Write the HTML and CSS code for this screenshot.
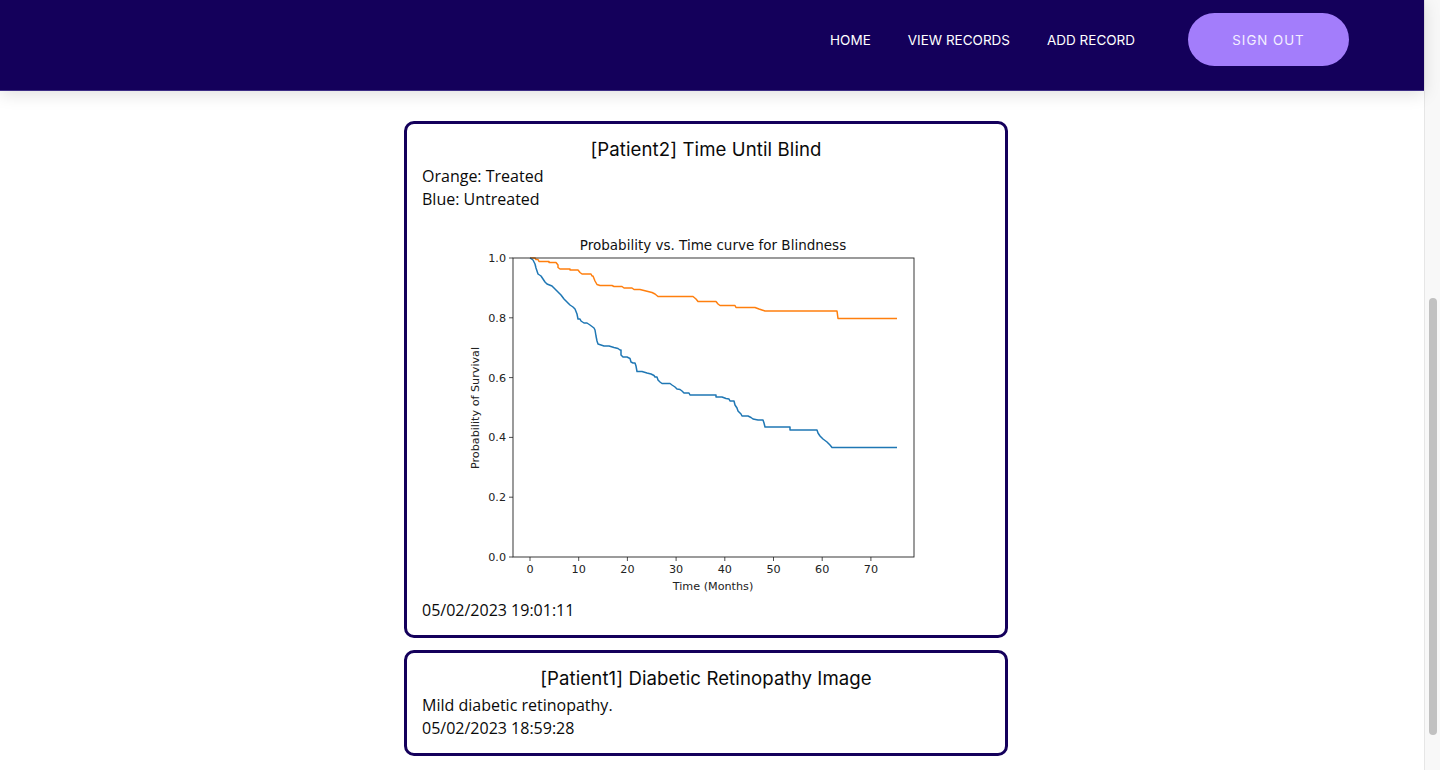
FILE: index.html
```html
<!DOCTYPE html>
<html lang="en">
<head>
<meta charset="utf-8">
<title>Records</title>
<link rel="stylesheet" href="styles.css">
</head>
<body>
<div class="page">
<header class="topbar">
  <nav class="nav">
    <a class="nav-link" href="#">HOME</a>
    <a class="nav-link" href="#">VIEW RECORDS</a>
    <a class="nav-link" href="#">ADD RECORD</a>
    <a class="signout" href="#">SIGN OUT</a>
  </nav>
</header>
<main class="records">
  <section class="card">
    <h2 class="card-title">[Patient2] Time Until Blind</h2>
    <p class="card-text">Orange: Treated</p>
    <p class="card-text">Blue: Untreated</p>
    <div class="chart-wrap">
      <svg class="chart" width="517" height="388" viewBox="448 210 517 388" xmlns="http://www.w3.org/2000/svg">
        <rect x="448" y="210" width="517" height="388" fill="#fff"/>
        <text class="c-title" x="713" y="249" text-anchor="middle">Probability vs. Time curve for Blindness</text>
        <g class="ticks" stroke="#222" stroke-width="0.8">
          <line x1="509" y1="556" x2="513" y2="556"/>
          <line x1="509" y1="496.2" x2="513" y2="496.2"/>
          <line x1="509" y1="436.4" x2="513" y2="436.4"/>
          <line x1="509" y1="376.6" x2="513" y2="376.6"/>
          <line x1="509" y1="316.8" x2="513" y2="316.8"/>
          <line x1="509" y1="257" x2="513" y2="257"/>
          <line x1="530" y1="556" x2="530" y2="560"/>
          <line x1="578.7" y1="556" x2="578.7" y2="560"/>
          <line x1="627.4" y1="556" x2="627.4" y2="560"/>
          <line x1="676.1" y1="556" x2="676.1" y2="560"/>
          <line x1="724.8" y1="556" x2="724.8" y2="560"/>
          <line x1="773.5" y1="556" x2="773.5" y2="560"/>
          <line x1="822.2" y1="556" x2="822.2" y2="560"/>
          <line x1="870.9" y1="556" x2="870.9" y2="560"/>
        </g>
        <g class="c-tick" text-anchor="end">
          <text x="506" y="560">0.0</text>
          <text x="506" y="500.2">0.2</text>
          <text x="506" y="440.4">0.4</text>
          <text x="506" y="380.6">0.6</text>
          <text x="506" y="320.8">0.8</text>
          <text x="506" y="261">1.0</text>
        </g>
        <g class="c-tick" text-anchor="middle">
          <text x="530" y="572">0</text>
          <text x="578.7" y="572">10</text>
          <text x="627.4" y="572">20</text>
          <text x="676.1" y="572">30</text>
          <text x="724.8" y="572">40</text>
          <text x="773.5" y="572">50</text>
          <text x="822.2" y="572">60</text>
          <text x="870.9" y="572">70</text>
        </g>
        <text class="c-label" x="713" y="589" text-anchor="middle">Time (Months)</text>
        <text class="c-label" x="0" y="0" text-anchor="middle" transform="translate(479 407) rotate(-90)">Probability of Survival</text>
        <path fill="none" stroke="#ff7f0e" stroke-width="1.5" stroke-linejoin="round"
          d="M530 257 H535 L536 258.5 H538 L539 260.5 H549 V261.5 H556 L558 264 V266.5 L560 268 H570 V269 H578 L580 271.5 L582 273 H591 L592 275 H593 L595 280 L597 283.5 L600 284.5 H612 L614 285.5 H622 L624 287 H632 L634 288.5 H640 L644 289.5 L648 290.5 L652 291.5 L655 293 L658 295.5 H693 L696 298 L698 300.5 H716 L718 303 L720 304.5 H735 L736 306.5 H755 L759 308 L762 309 L765 310 H837 L838 317.5 H897"/>
        <path fill="none" stroke="#1f77b4" stroke-width="1.5" stroke-linejoin="round"
          d="M530 257 L533 259 L535 263 L536 267 L537 270 L538 273 L541 275 L543 278 L545 281 L547 283 L552 285 L555 288 L558 291 L561 294 L564 298 L567 301 L570 304 L573 306 L575 308 L577 313 L578 318 H580 L581 320 L584 322 H587 L590 324 L594 327 L595 329 L596 335 L597 340 L598 343 L601 344 L604 345 H609 L614 346.5 L618 347.5 L620 349 H621 V354 L623 356 H627 L630 357.5 L631 361 L633 362 H635 L636 365 L637 370.5 H642 L647 372 L651 373 L654 374.5 L655 376 H657 L658 379 L660 381 L662 382.5 H670 L672 384 L675 386 L677 388 L680 388.5 L682 390 L684 392 H689 L690 394 H716 V396 H722 L726 397.5 L729 398 L730 400 H734 L735 404 L737 407 L738 410 L741 413 L742 415 H748 L751 416.5 L753 418 L758 419 H763 L764 422 L765 426 H790 V429 H817 L818 432 L820 435 L823 438 L827 441 L830 444 L832 446.5 H897"/>
        <rect x="513" y="257" width="401" height="299" fill="none" stroke="#222" stroke-width="0.9"/>
      </svg>
    </div>
    <p class="card-text">05/02/2023 19:01:11</p>
  </section>
  <section class="card">
    <h2 class="card-title">[Patient1] Diabetic Retinopathy Image</h2>
    <p class="card-text">Mild diabetic retinopathy.</p>
    <p class="card-text">05/02/2023 18:59:28</p>
  </section>
</main>
</div>
<div class="scroll-thumb"></div>
</body>
</html>
```
FILE: styles.css
```css
html,
body {
  height: 100%;
  overflow: hidden;
}
body {
  margin: 0;
  background: #f8f8f8;
  font-family: "Open Sans", "Noto Sans", sans-serif;
  color: #0a0a0a;
}
.page {
  width: 1425px;
  height: 100vh;
  background: #ffffff;
  border-right: 1px solid #e6e6e6;
  box-sizing: border-box;
}
.scroll-thumb {
  position: fixed;
  right: 3px;
  top: 298px;
  width: 8px;
  height: 437px;
  border-radius: 4px;
  background: #c1c1c1;
}
.topbar {
  height: 79px;
  padding-bottom: 11px;
  background: #14005b;
  border-bottom: 1px solid #3d2e85;
  box-shadow: 0 3px 16px rgba(0, 0, 0, 0.13);
  display: flex;
  align-items: center;
  justify-content: flex-end;
  padding-right: 75px;
  position: relative;
  z-index: 1;
}
.nav {
  display: flex;
  align-items: center;
}
.nav-link {
  font-family: Inter, "Open Sans", sans-serif;
  font-size: 13.5px;
  color: #ffffff;
  text-decoration: none;
  margin-left: 37px;
}
.nav-link:first-child {
  margin-left: 0;
}
.signout {
  margin-left: 53px;
  width: 161px;
  height: 53px;
  border-radius: 27px;
  background: #a37dfb;
  color: #f4f0ff;
  font-family: Inter, "Open Sans", sans-serif;
  font-size: 13.3px;
  letter-spacing: 1px;
  text-decoration: none;
  display: flex;
  align-items: center;
  justify-content: center;
}
.records {
  display: flex;
  flex-direction: column;
  align-items: center;
  gap: 12px;
  padding-top: 30px;
  padding-right: 12px;
}
.card {
  width: 568px;
  border: 3px solid #14005b;
  border-radius: 10px;
  padding: 12px 15px 13px;
}
.card-title {
  margin: 0 0 2px;
  text-align: center;
  font-family: Inter, "Open Sans", sans-serif;
  font-weight: 400;
  font-size: 18.6px;
  letter-spacing: 0.1px;
  line-height: 27px;
  color: #0a0a0a;
}
.card-text {
  margin: 0;
  font-size: 16px;
  line-height: 23px;
}
.chart-wrap {
  display: flex;
  justify-content: center;
}
.chart {
  display: block;
}
.c-title {
  font-family: "DejaVu Sans", sans-serif;
  font-size: 13.5px;
  fill: #111;
}
.c-tick {
  font-family: "DejaVu Sans", sans-serif;
  font-size: 11.2px;
  fill: #222;
}
.c-label {
  font-family: "DejaVu Sans", sans-serif;
  font-size: 11.2px;
  fill: #222;
}
```
